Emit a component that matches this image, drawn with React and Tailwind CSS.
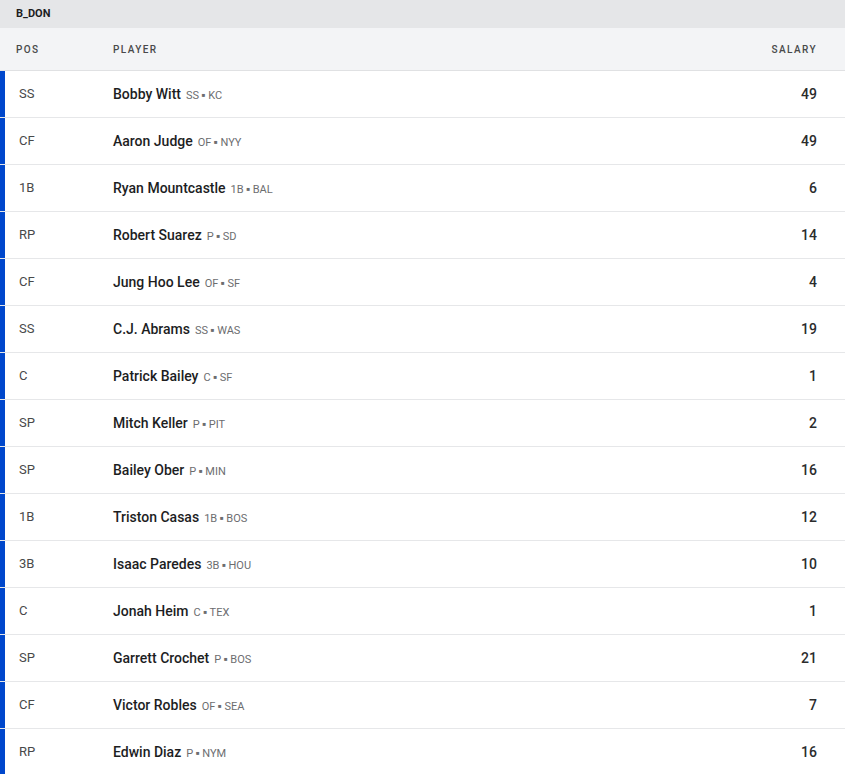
const players = [
  { pos: "SS", name: "Bobby Witt", meta: "SS", team: "KC", salary: 49 },
  { pos: "CF", name: "Aaron Judge", meta: "OF", team: "NYY", salary: 49 },
  { pos: "1B", name: "Ryan Mountcastle", meta: "1B", team: "BAL", salary: 6 },
  { pos: "RP", name: "Robert Suarez", meta: "P", team: "SD", salary: 14 },
  { pos: "CF", name: "Jung Hoo Lee", meta: "OF", team: "SF", salary: 4 },
  { pos: "SS", name: "C.J. Abrams", meta: "SS", team: "WAS", salary: 19 },
  { pos: "C", name: "Patrick Bailey", meta: "C", team: "SF", salary: 1 },
  { pos: "SP", name: "Mitch Keller", meta: "P", team: "PIT", salary: 2 },
  { pos: "SP", name: "Bailey Ober", meta: "P", team: "MIN", salary: 16 },
  { pos: "1B", name: "Triston Casas", meta: "1B", team: "BOS", salary: 12 },
  { pos: "3B", name: "Isaac Paredes", meta: "3B", team: "HOU", salary: 10 },
  { pos: "C", name: "Jonah Heim", meta: "C", team: "TEX", salary: 1 },
  { pos: "SP", name: "Garrett Crochet", meta: "P", team: "BOS", salary: 21 },
  { pos: "CF", name: "Victor Robles", meta: "OF", team: "SEA", salary: 7 },
  { pos: "RP", name: "Edwin Diaz", meta: "P", team: "NYM", salary: 16 },
];

const PlayerRow = ({ p }) => (
  <div className="flex h-[47px] border-b border-[#e6e7e9]">
    <div className="w-[5px] bg-[#0047cc]" />
    <div className="flex flex-1 items-center">
      <div className="w-[108px] pl-[14px] text-[13px] text-[#48494a]">{p.pos}</div>
      <div className="flex flex-1 items-baseline">
        <span className="text-[14px] font-medium text-[#1d1e1f]">{p.name}</span>
        <span className="ml-[5px] text-[11px] text-[#6c6d6f]">
          {p.meta} <span className="text-[6px] align-[2px]">&#9632;</span> {p.team}
        </span>
      </div>
      <div className="pr-[28px] text-right text-[14px] font-medium text-[#2b2c2d]">{p.salary}</div>
    </div>
  </div>
);

export default function App() {
  return (
    <div className="w-[845px] bg-white font-['Roboto',sans-serif]">
      {/* Team name */}
      <div className="flex h-[28px] items-center bg-[#e5e6e8] pl-[16px] text-[11px] font-bold text-[#1d1e1f]">
        B_DON
      </div>

      {/* Column header */}
      <div className="flex h-[43px] items-center border-b border-[#e0e1e3] bg-[#f3f4f6] text-[10px] font-medium tracking-[0.14em] text-[#48494a]">
        <div className="w-[113px] pl-[16px]">POS</div>
        <div className="flex-1">PLAYER</div>
        <div className="pr-[28px]">SALARY</div>
      </div>

      {players.map((p, i) => (
        <PlayerRow key={i} p={p} />
      ))}
    </div>
  );
}
